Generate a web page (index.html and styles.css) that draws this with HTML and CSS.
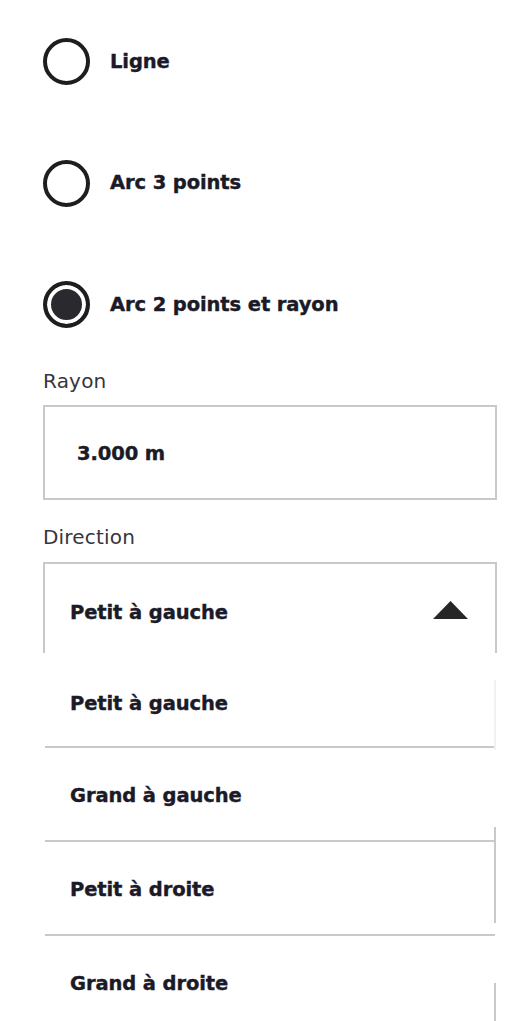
FILE: index.html
```html
<!DOCTYPE html>
<html lang="fr">
<head>
<meta charset="utf-8">
<title>Type de segment</title>
<link rel="stylesheet" href="styles.css">
</head>
<body>
<div class="panel">
  <div class="radio-group">
    <div class="radio-row"><span class="radio"></span><span class="radio-label">Ligne</span></div>
    <div class="radio-row"><span class="radio"></span><span class="radio-label">Arc 3 points</span></div>
    <div class="radio-row"><span class="radio radio-checked"></span><span class="radio-label">Arc 2 points et rayon</span></div>
  </div>

  <div class="field-label field-label-first">Rayon</div>
  <div class="input-box"><span class="value">3.000 m</span></div>

  <div class="field-label field-label-second">Direction</div>
  <div class="select-box">
    <span class="value">Petit à gauche</span>
    <svg class="caret" width="35" height="18" viewBox="0 0 35 18"><polygon points="17.5,0 35,18 0,18" fill="#262626"/></svg>
  </div>
  <ul class="options">
    <li class="option option-1"><span class="value">Petit à gauche</span></li>
    <li class="option option-2"><span class="value">Grand à gauche</span></li>
    <li class="option option-3"><span class="value">Petit à droite</span></li>
    <li class="option option-4"><span class="value">Grand à droite</span></li>
  </ul>
</div>
</body>
</html>
```
FILE: styles.css
```css
html, body {
  margin: 0;
  padding: 0;
  background: #ffffff;
  overflow: hidden;
}

body {
  font-family: "DejaVu Sans", "Liberation Sans", sans-serif;
  color: #1a1a28;
}

.panel {
  width: 454px;
  margin-left: 43px;
  padding-top: 1px;
}

.radio-group {
  display: flex;
  flex-direction: column;
}

.radio-row {
  height: 121.5px;
  display: flex;
  align-items: center;
  gap: 20px;
}

.radio {
  width: 47px;
  height: 47px;
  box-sizing: border-box;
  border: 4px solid #1e1e1e;
  border-radius: 50%;
  flex: none;
}

.radio-checked {
  background: #2a2a2e;
  box-shadow: inset 0 0 0 4px #ffffff;
}

.radio-label,
.value {
  font-weight: bold;
  font-size: 19.5px;
  letter-spacing: -0.1px;
  line-height: 24px;
  color: #1a1a28;
  -webkit-text-stroke: 0.4px #1a1a28;
}

.field-label {
  font-size: 20px;
  line-height: 24px;
  color: #36363c;
  letter-spacing: 0.2px;
}

.field-label-first {
  margin-top: 3px;
  margin-bottom: 12px;
}

.field-label-second {
  margin-top: 25px;
  margin-bottom: 13px;
}

.input-box {
  height: 95px;
  box-sizing: border-box;
  border: 2px solid #c9c9c9;
  padding-left: 32px;
  display: flex;
  align-items: center;
  padding-top: 3px;
}

.select-box {
  height: 91px;
  box-sizing: border-box;
  border: 2px solid #c9c9c9;
  border-bottom: none;
  padding-left: 25px;
  padding-right: 27px;
  display: flex;
  align-items: center;
  justify-content: space-between;
  padding-top: 10px;
}

.caret {
  display: block;
  margin-top: -7px;
}

.options {
  list-style: none;
  margin: 0 2px;
  padding: 1px 0 0 0;
}

.option {
  position: relative;
  height: 94px;
  box-sizing: border-box;
  border-bottom: 2px solid #c9c9c9;
  padding-left: 25px;
  padding-top: 36px;
}

.option-4 {
  border-bottom: none;
}

.option-1 {
  padding-top: 38px;
}

.option::after {
  content: "";
  position: absolute;
  right: -1px;
  width: 2px;
  background: #c9c9c9;
}

.option-1::after {
  top: 26px;
  height: 70px;
  background: #f1f1f1;
}

.option-2::after {
  top: 79px;
  bottom: -2px;
}

.option-3::after {
  top: 0;
  height: 81px;
}

.option-4::after {
  top: 47px;
  bottom: 0;
}
```
